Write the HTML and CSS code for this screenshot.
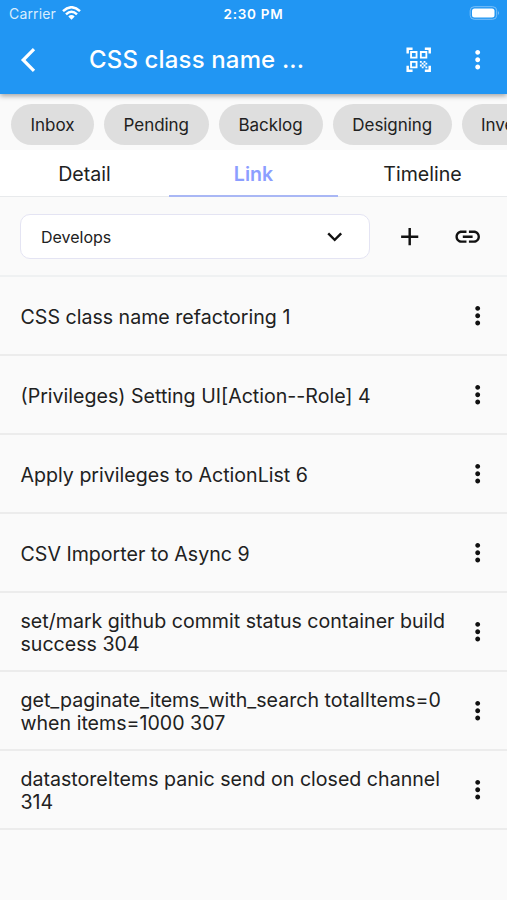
FILE: index.html
```html
<!DOCTYPE html>
<html lang="en">
<head>
<meta charset="utf-8">
<title>CSS class name</title>
<link rel="stylesheet" href="styles.css">
</head>
<body>
<svg class="defs" width="0" height="0">
  <symbol id="more" viewBox="0 0 24 24"><path d="M12 8c1.1 0 2-.9 2-2s-.9-2-2-2-2 .9-2 2 .9 2 2 2zm0 2c-1.1 0-2 .9-2 2s.9 2 2 2 2-.9 2-2-.9-2-2-2zm0 6c-1.1 0-2 .9-2 2s.9 2 2 2 2-.9 2-2-.9-2-2-2z"/></symbol>
</svg>
<header class="appbar">
  <div class="status">
    <div class="carrier"><span class="carrier-name">Carrier</span>
      <svg class="wifi" viewBox="0 0 19 14"><g fill="none" stroke="#fff" stroke-width="2.500"><path d="M1 5.200Q9.500-2.700 18 5.200"/><path d="M4 8.300Q9.500 3.200 15 8.300"/></g><path fill="#fff" d="M6.300 10.500Q9.500 7.700 12.700 10.500L9.500 13.800z"/></svg>
    </div>
    <span class="time">2:30 PM</span>
    <svg class="battery" viewBox="0 0 32 14"><rect x="1.200" y=".7" width="26.500" height="12.600" rx="4" fill="none" stroke="#7dc0f8" stroke-width="1"/><rect x="3" y="2.500" width="22.500" height="9" rx="2.500" fill="#fff"/><path fill="#7dc0f8" d="M29 5q2 2 0 4z"/></svg>
  </div>
  <div class="toolbar">
    <svg class="back" viewBox="0 0 16 26"><path d="M14 2.200 3.200 13 14 23.800" fill="none" stroke="#fff" stroke-width="3.200"/></svg>
    <h1 class="title">CSS class name ...</h1>
    <svg class="icon qr" viewBox="0 0 24 24"><path d="M9.500 6.500v3h-3v-3h3M11 5H5v6h6V5zm-1.500 9.500v3h-3v-3h3M11 13H5v6h6v-6zm6.500-6.500v3h-3v-3h3M19 5h-6v6h6V5zm-6 8h1.500v1.500H13V13zm1.500 1.500H16V16h-1.500v-1.500zM16 13h1.500v1.500H16V13zm-3 3h1.500v1.500H13V16zm1.500 1.500H16V19h-1.500v-1.500zM16 16h1.500v1.500H16V16zm1.500-1.500H19V16h-1.500v-1.500zm0 3H19V19h-1.500v-1.500zM22 7h-2V4h-3V2h5v5zm0 15v-5h-2v3h-3v2h5zM2 22h5v-2H4v-3H2v5zM2 2v5h2V4h3V2H2z"/></svg>
    <svg class="icon"><use href="#more"/></svg>
  </div>
</header>
<div class="chips">
  <span class="chip inbox">Inbox</span><span class="chip pending">Pending</span><span class="chip backlog">Backlog</span><span class="chip designing">Designing</span><span class="chip last">Inve</span>
</div>
<nav class="tabs">
  <span class="tab">Detail</span><span class="tab active">Link</span><span class="tab">Timeline</span>
</nav>
<div class="filter">
  <div class="select"><span>Develops</span><svg class="icon" viewBox="0 0 24 24"><path d="M7.410 8.590 12 13.170l4.590-4.580L18 10l-6 6-6-6 1.410-1.410z"/></svg></div>
  <svg class="icon" viewBox="0 0 24 24"><path d="M19 13h-6v6h-2v-6H5v-2h6V5h2v6h6v2z"/></svg>
  <svg class="icon" viewBox="0 0 24 24"><path d="M3.900 12c0-1.710 1.390-3.100 3.100-3.100h4V7H7c-2.760 0-5 2.240-5 5s2.240 5 5 5h4v-1.900H7c-1.710 0-3.100-1.390-3.100-3.100zM8 13h8v-2H8v2zm9-6h-4v1.900h4c1.710 0 3.100 1.390 3.100 3.100s-1.390 3.100-3.100 3.100h-4V17h4c2.760 0 5-2.240 5-5s-2.240-5-5-5z"/></svg>
</div>
<main class="list">
  <div class="row"><span>CSS class name refactoring 1</span><svg class="icon"><use href="#more"/></svg></div>
  <div class="row"><span>(Privileges) Setting UI[Action--Role] 4</span><svg class="icon"><use href="#more"/></svg></div>
  <div class="row"><span>Apply privileges to ActionList 6</span><svg class="icon"><use href="#more"/></svg></div>
  <div class="row"><span>CSV Importer to Async 9</span><svg class="icon"><use href="#more"/></svg></div>
  <div class="row"><span>set/mark github commit status container build<br>success 304</span><svg class="icon"><use href="#more"/></svg></div>
  <div class="row"><span>get_paginate_items_with_search totalItems=0<br>when items=1000 307</span><svg class="icon"><use href="#more"/></svg></div>
  <div class="row"><span>datastoreItems panic send on closed channel<br>314</span><svg class="icon"><use href="#more"/></svg></div>
</main>
</body>
</html>
```

FILE: styles.css
```css
* { box-sizing: border-box; }
body {
  margin: 0;
  width: 507px;
  height: 900px;
  overflow: hidden;
  background: #fafafa;
  color: #212121;
  font-family: Inter, "Liberation Sans", sans-serif;
}
.defs { display: block; height: 0; }
.icon { display: block; width: 29.4px; height: 29.4px; flex: none; fill: #111; }
.appbar {
  position: relative;
  height: 94px;
  background: #2196f3;
  color: #fff;
  box-shadow: 0 2px 5px rgba(0, 0, 0, .35);
}
.appbar .icon { fill: #fff; }
.status {
  display: grid;
  grid-template-columns: 1fr auto 1fr;
  align-items: center;
  height: 27px;
  padding: 0 6px 0 9px;
  font-size: 14px;
}
.carrier { display: flex; align-items: center; gap: 6px; color: #d9edfd; }
.carrier-name { letter-spacing: .15px; }
.wifi { width: 19px; height: 14px; margin-top: -2px; }
.time { margin-left: -3px; font-size: 13.5px; font-weight: 600; letter-spacing: .75px; }
.battery { width: 32px; height: 14px; margin-top: -1px; justify-self: end; }
.toolbar { display: flex; align-items: center; height: 66px; padding: 0 15px 0 20px; }
.back { width: 16px; height: 26px; }
.title { flex: 1; margin: 0 0 0 53px; font-size: 24px; line-height: 30px; font-weight: 500; letter-spacing: .15px; white-space: nowrap; }
.qr { margin-right: 29.6px; }
.chips { display: flex; gap: 10px; height: 56px; padding: 10px 0 4px 11px; overflow: hidden; }
.chip {
  display: flex;
  flex: none;
  align-items: center;
  justify-content: center;
  height: 41px;
  border-radius: 21px;
  background: #dedede;
  font-size: 17px;
  letter-spacing: -.05px;
}
.inbox { width: 83px; }
.pending { width: 104.5px; }
.backlog { width: 104px; }
.designing { width: 119.5px; }
.last { width: 130px; justify-content: flex-start; padding-left: 19px; }
.tabs { display: grid; grid-template-columns: repeat(3, 1fr); height: 47px; background: #fff; border-bottom: 1px solid #e8eaec; }
.tab { display: flex; align-items: center; justify-content: center; height: 47px; font-size: 19.6px; }
.active { padding-top: 2px; color: #8c9eff; font-weight: 600; border-bottom: 2px solid #a9b7f5; }
.filter { display: flex; align-items: center; height: 80px; padding: 1px 24px 0 20px; border-bottom: 2px solid #eff1f2; }
.filter > .icon { margin-left: 24.5px; }
.filter > .icon + .icon { margin-left: 29.1px; }
.select {
  display: flex;
  align-items: center;
  justify-content: space-between;
  width: 350px;
  height: 45px;
  padding: 0 20px;
  border: 1.5px solid #e4e4f3;
  border-radius: 10px;
  background: #fff;
  font-size: 16px;
}
.row {
  display: flex;
  align-items: center;
  justify-content: space-between;
  height: 79px;
  padding: 3px 15px 0 20.5px;
  border-bottom: 2px solid #ececec;
  font-size: 19.6px;
  line-height: 23px;
  white-space: nowrap;
}
.row .icon { margin-top: -3.5px; }
```
